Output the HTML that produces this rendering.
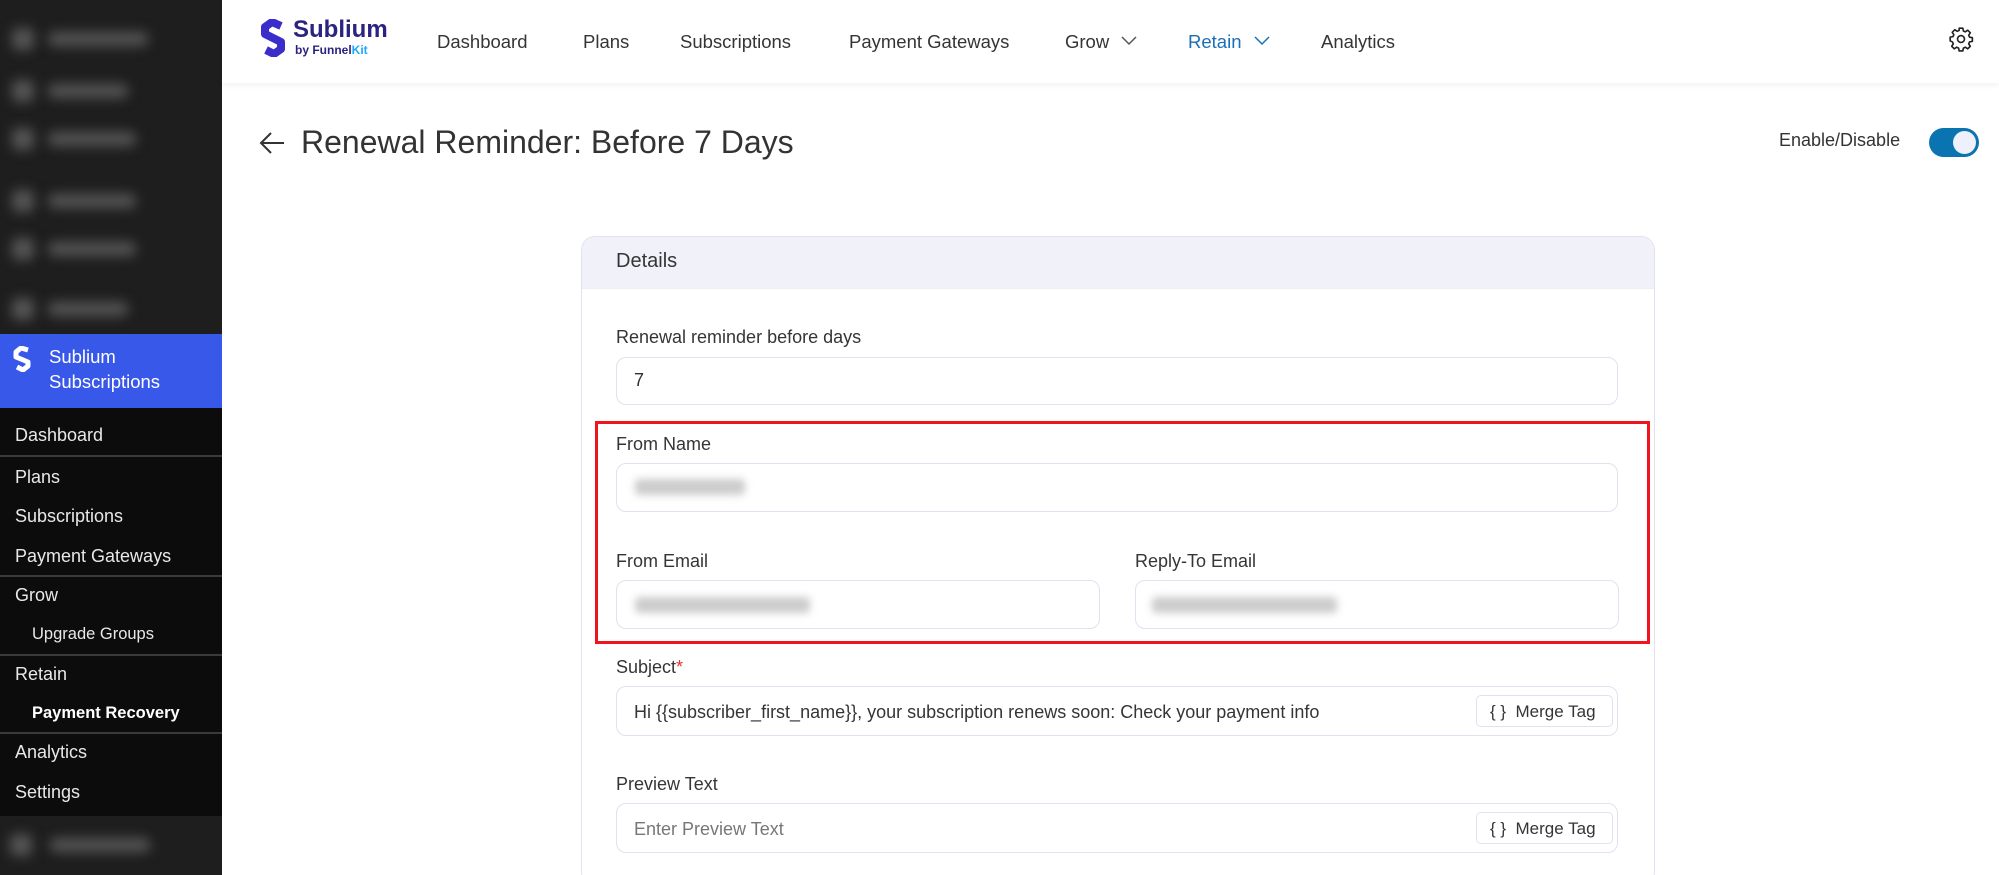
<!DOCTYPE html>
<html style="overflow:hidden;height:875px"><head><meta charset="utf-8"><style>
*{box-sizing:border-box;margin:0;padding:0}
body{width:1999px;height:875px;overflow:hidden;background:#fff;font-family:"Liberation Sans",sans-serif;position:relative;color:#353030}
.abs{position:absolute}
#sb{left:0;top:0;width:222px;height:875px;background:#0c0c0c}
#sbtop{left:0;top:0;width:222px;height:334px;background:#1e1e1e}
.blur{position:absolute;background:#555;filter:blur(6px);border-radius:6px}
#blue{left:0;top:334px;width:222px;height:74px;background:#3858e9;color:#fff;font-size:18.5px;line-height:25px;padding:10px 0 0 49px}
.si{position:absolute;left:15px;color:#e8e8e8;font-size:18px}
.sub{left:32px;font-size:16.5px}
.div{position:absolute;left:0;width:222px;height:2px;background:#3a3a3a}
#hdr{left:222px;top:0;width:1777px;height:83px;background:#fff;box-shadow:0 2px 6px rgba(0,0,0,.06)}
.nav{position:absolute;top:31px;font-size:18.5px;color:#353535}
.lbl{position:absolute;left:616px;font-size:18px;color:#353535}
.inp{position:absolute;border:1.5px solid #e1e1ef;border-radius:10px;background:#fff}
.mt{position:absolute;border:1.5px solid #e1e1ef;border-radius:5px;font-size:17px;color:#353535;padding:6px 0 0 13px;width:137px;height:32px}
.bt{position:absolute;height:16px;background:#ccc;filter:blur(4px);border-radius:4px}
</style></head><body>
<div id="sb" class="abs"></div>
<div id="sbtop" class="abs">
<div class="blur" style="left:12px;top:28px;width:22px;height:22px"></div><div class="blur" style="left:48px;top:32px;width:100px;height:14px"></div>
<div class="blur" style="left:12px;top:80px;width:22px;height:22px"></div><div class="blur" style="left:48px;top:84px;width:80px;height:14px"></div>
<div class="blur" style="left:12px;top:128px;width:22px;height:22px"></div><div class="blur" style="left:48px;top:132px;width:88px;height:14px"></div>
<div class="blur" style="left:12px;top:190px;width:22px;height:22px"></div><div class="blur" style="left:48px;top:194px;width:88px;height:14px"></div>
<div class="blur" style="left:12px;top:238px;width:22px;height:22px"></div><div class="blur" style="left:48px;top:242px;width:88px;height:14px"></div>
<div class="blur" style="left:12px;top:298px;width:22px;height:22px"></div><div class="blur" style="left:48px;top:302px;width:80px;height:14px"></div>
</div>
<div id="blue" class="abs">Sublium<br>Subscriptions
<svg class="abs" style="left:12px;top:12px" width="22" height="26" viewBox="0 0 22 26"><path d="M16 4 L9 2 L4 6 L4 11 L16 16 L16 20 L11 24 L5 21" stroke="#fff" stroke-width="5" fill="none" stroke-linejoin="round"/></svg></div>
<div class="si" style="top:425px">Dashboard</div><div class="div" style="top:455px"></div>
<div class="si" style="top:467px">Plans</div>
<div class="si" style="top:506px">Subscriptions</div>
<div class="si" style="top:546px">Payment Gateways</div><div class="div" style="top:575px"></div>
<div class="si" style="top:585px">Grow</div>
<div class="si sub" style="top:625px">Upgrade Groups</div><div class="div" style="top:654px"></div>
<div class="si" style="top:664px">Retain</div>
<div class="si sub" style="top:704px;font-weight:bold;color:#fff">Payment Recovery</div><div class="div" style="top:732px"></div>
<div class="si" style="top:742px">Analytics</div>
<div class="si" style="top:782px">Settings</div>
<div class="abs" style="left:0;top:816px;width:222px;height:59px;background:#1e1e1e"><div class="blur" style="left:10px;top:18px;width:22px;height:22px"></div><div class="blur" style="left:50px;top:22px;width:100px;height:14px"></div></div>

<div id="hdr" class="abs">
<svg class="abs" style="left:37px;top:19px" width="30" height="38" viewBox="0 0 30 38"><path d="M22 7 L13 3 L6 8 L6 15 L22 23 L22 30 L15 35 L7 31" stroke="#3a2dc9" stroke-width="8" fill="none" stroke-linejoin="round"/></svg>
<div class="abs" style="left:71px;top:16px;font-size:24px;font-weight:bold;color:#2b2380">Sublium</div>
<div class="abs" style="left:73px;top:43px;font-size:12px;font-weight:bold;color:#2b2380">by Funnel<span style="color:#1aa7ff">Kit</span></div>
<div class="nav" style="left:215px">Dashboard</div>
<div class="nav" style="left:361px">Plans</div>
<div class="nav" style="left:458px">Subscriptions</div>
<div class="nav" style="left:627px">Payment Gateways</div>
<div class="nav" style="left:843px">Grow</div>
<svg class="abs" style="left:899px;top:36px" width="16" height="10"><path d="M1 1 L8 8 L15 1" stroke="#555" stroke-width="1.5" fill="none"/></svg>
<div class="nav" style="left:966px;color:#1a6fb8">Retain</div>
<svg class="abs" style="left:1032px;top:36px" width="16" height="10"><path d="M1 1 L8 8 L15 1" stroke="#1a6fb8" stroke-width="1.5" fill="none"/></svg>
<div class="nav" style="left:1099px">Analytics</div>
<svg class="abs" style="left:1726px;top:26px" width="26" height="26" viewBox="0 0 24 24"><path d="M10.3 2h3.4l.5 2.6 1.8.8 2.2-1.5 2.4 2.4-1.5 2.2.8 1.8 2.6.5v3.4l-2.6.5-.8 1.8 1.5 2.2-2.4 2.4-2.2-1.5-1.8.8-.5 2.6h-3.4l-.5-2.6-1.8-.8-2.2 1.5-2.4-2.4 1.5-2.2-.8-1.8L2 13.7v-3.4l2.6-.5.8-1.8L3.9 5.8l2.4-2.4 2.2 1.5 1.8-.8z" stroke="#222" stroke-width="1.5" fill="none" stroke-linejoin="round"/><circle cx="12" cy="12" r="3.2" stroke="#222" stroke-width="1.5" fill="none"/></svg>
</div>

<svg class="abs" style="left:259px;top:131px" width="26" height="24"><path d="M25 12 H2 M12 2 L2 12 L12 22" stroke="#333" stroke-width="2" fill="none"/></svg>
<div class="abs" style="left:301px;top:124px;font-size:32px;color:#333">Renewal Reminder: Before 7 Days</div>
<div class="abs" style="left:1779px;top:130px;font-size:18px;color:#333">Enable/Disable</div>
<div class="abs" style="left:1929px;top:128px;width:50px;height:29px;border-radius:15px;background:#0a74b0"><div class="abs" style="left:24px;top:3px;width:23px;height:23px;border-radius:50%;background:#eef0fb"></div></div>

<div class="abs" style="left:581px;top:236px;width:1074px;height:650px;border:1.5px solid #e1e1ef;border-radius:14px;overflow:hidden">
<div style="height:52px;background:#f1f1fa;border-bottom:1px solid #eee"></div></div>
<div class="abs" style="left:616px;top:250px;font-size:20px;color:#353535">Details</div>

<div class="lbl" style="top:327px">Renewal reminder before days</div>
<div class="inp" style="left:616px;top:357px;width:1002px;height:48px"></div>
<div class="abs" style="left:634px;top:370px;font-size:18px">7</div>

<div class="abs" style="left:595px;top:421px;width:1055px;height:223px;border:3px solid #f0141e"></div>
<div class="lbl" style="top:434px">From Name</div>
<div class="inp" style="left:616px;top:463px;width:1002px;height:49px"></div>
<div class="bt" style="left:635px;top:479px;width:110px"></div>
<div class="lbl" style="top:551px">From Email</div>
<div class="lbl" style="left:1135px;top:551px">Reply-To Email</div>
<div class="inp" style="left:616px;top:580px;width:484px;height:49px"></div>
<div class="inp" style="left:1135px;top:580px;width:484px;height:49px"></div>
<div class="bt" style="left:635px;top:597px;width:175px"></div>
<div class="bt" style="left:1152px;top:597px;width:185px"></div>

<div class="lbl" style="top:657px">Subject<span style="color:#e0322c">*</span></div>
<div class="inp" style="left:616px;top:686px;width:1002px;height:50px"></div>
<div class="abs" style="left:634px;top:702px;font-size:18px;color:#353535">Hi {{subscriber_first_name}}, your subscription renews soon: Check your payment info</div>
<div class="mt" style="left:1476px;top:695px">{ }&nbsp; Merge Tag</div>

<div class="lbl" style="top:774px">Preview Text</div>
<div class="inp" style="left:616px;top:803px;width:1002px;height:50px"></div>
<div class="abs" style="left:634px;top:819px;font-size:18px;color:#777">Enter Preview Text</div>
<div class="mt" style="left:1476px;top:812px">{ }&nbsp; Merge Tag</div>
</body></html>
